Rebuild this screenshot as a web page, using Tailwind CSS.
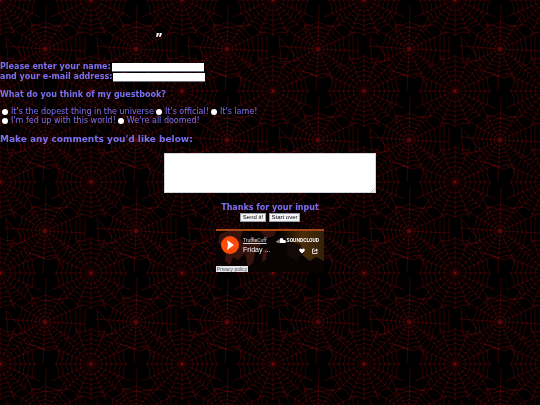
<!DOCTYPE html>
<html lang="en">
<head>
  <meta charset="utf-8">
  <meta name="viewport" content="width=device-width, initial-scale=1">
  <title>Guestbook</title>
  <script src="https://cdn.jsdelivr.net/npm/@tailwindcss/browser@4"></script>
</head>
<body class="min-h-screen bg-black font-['DejaVu_Sans',sans-serif] text-[8px] leading-[10px] text-[#7a72f0]">

  <!-- Tiled spider web background -->
  <svg class="fixed inset-0 -z-10 h-full w-full" aria-hidden="true">
    <defs>
      <path id="ring" vector-effect="non-scaling-stroke" d="M0-30Q8-26 17-25Q21-18 28-13Q27-6 30 2Q26 8 26 17Q18 19 13 27Q6 26-2 30Q-8 26-17 25Q-20 18-27 13Q-26 6-30-2Q-26-8-25-17Q-18-19-13-26Q-6-26 0-30Z"/>
      <g id="rings">
        <use href="#ring" transform="scale(.07)"/>
        <use href="#ring" transform="scale(.2)"/>
        <use href="#ring" transform="scale(.33)"/>
        <use href="#ring" transform="scale(.46)"/>
        <use href="#ring" transform="scale(.6)"/>
        <use href="#ring" transform="scale(.75)"/>
        <use href="#ring" transform="scale(.9)"/>
      </g>
      <path id="arc" vector-effect="non-scaling-stroke" d="M0-40Q8-35 15-37Q20-28 28-28Q28-20 37-15Q35-8 40 0Q35 8 37 15Q28 20 28 28Q20 28 15 37Q8 35 0 40Q-8 35-15 37Q-20 28-28 28Q-28 20-37 15Q-35 8-40 0Q-35-8-37-15Q-28-20-28-28Q-20-28-15-37Q-8-35 0-40Z"/>
      <g id="corner">
        <path d="M-36 0H36M0-36V36M-32-32L32 32M-32 32L32-32M-40-17L40 17M-40 17L40-17M-15-36L15 36M-15 36L15-36"/>
        <use href="#arc" transform="scale(.28)"/>
        <use href="#arc" transform="scale(.4)"/>
        <use href="#arc" transform="scale(.52)"/>
        <use href="#arc" transform="scale(.64)"/>
        <use href="#arc" transform="scale(.76)"/>
        <use href="#arc" transform="scale(.88)"/>
      </g>
      <pattern id="web" width="91" height="91" patternUnits="userSpaceOnUse">
        <g fill="none" stroke="#b80808" stroke-opacity=".38" stroke-width=".7">
          <g transform="translate(45 49)">
            <path d="M0 0L1-44M0 0L23-36M0 0L38-17M0 0L40 2M0 0L34 22M0 0L18 38M0 0L-2 42M0 0L-22 32M0 0L-36 17M0 0L-40-3M0 0L-36-22M0 0L-20-38"/>
            <use href="#rings"/>
          </g>
          <use href="#corner"/>
          <use href="#corner" x="91"/>
          <use href="#corner" y="91"/>
          <use href="#corner" x="91" y="91"/>
          <path d="M6 35L8 62L28 60M7 38L25 59M32 24L45 28L68 25M76 37V60M80 34V62M85 36V60M31 24L34 38M38 75L50 78L60 73M25 70L44 76"/>
        </g>
      </pattern>
    </defs>
    <rect width="100%" height="100%" fill="url(#web)"/>
  </svg>

  <div class="h-[62px] pt-7 pl-[155px] text-[12px] leading-5 font-bold text-white">”</div>

  <form>
    <div class="font-bold">
      <div class="flex items-center gap-px">
        <label for="name">Please enter your name:</label>
        <input id="name" type="text" class="h-[9px] w-[92px] border-b border-gray-500 bg-white text-black">
      </div>
      <div class="flex items-center gap-px">
        <label for="email">and your e-mail address:</label>
        <input id="email" type="email" class="h-[9px] w-[92px] border-b border-gray-500 bg-white text-black">
      </div>
    </div>

    <fieldset class="mt-2">
      <legend class="font-bold">What do you think of my guestbook?</legend>
      <div class="mt-[7px] leading-[9px]">
        <div class="flex gap-[2px] pl-[2px]">
          <label class="flex items-center gap-[3px]"><input type="radio" name="opinion" class="size-[6px] appearance-none rounded-full bg-white checked:bg-blue-600">It's the dopest thing in the universe</label>
          <label class="flex items-center gap-[3px]"><input type="radio" name="opinion" class="size-[6px] appearance-none rounded-full bg-white checked:bg-blue-600">It's official!</label>
          <label class="flex items-center gap-[3px]"><input type="radio" name="opinion" class="size-[6px] appearance-none rounded-full bg-white checked:bg-blue-600">It's lame!</label>
        </div>
        <div class="flex gap-[2px] pl-[2px]">
          <label class="flex items-center gap-[3px]"><input type="radio" name="opinion" class="size-[6px] appearance-none rounded-full bg-white checked:bg-blue-600">I'm fed up with this world!</label>
          <label class="flex items-center gap-[3px]"><input type="radio" name="opinion" class="size-[6px] appearance-none rounded-full bg-white checked:bg-blue-600">We're all doomed!</label>
        </div>
      </div>
    </fieldset>

    <label for="comments" class="mt-2 block text-[9px] leading-3 font-bold">Make any comments you'd like below:</label>
    <div class="relative mx-auto mt-2 w-[212px]">
      <textarea id="comments" class="block h-10 w-full resize-none border border-gray-300 bg-white text-black"></textarea>
      <svg class="absolute right-px bottom-px size-1" viewBox="0 0 4 4" stroke="#999" stroke-width=".5" aria-hidden="true"><path d="M0 4L4 0M2 4L4 2"/></svg>
    </div>

    <div class="mt-[10px] text-center font-bold">Thanks for your input</div>
    <div class="flex justify-center gap-[3px] font-['Liberation_Sans',sans-serif] text-[6px] leading-[7px] text-black">
      <button type="submit" class="h-[9px] w-[26px] border border-gray-400 bg-gray-100">Send it!</button>
      <button type="reset" class="h-[9px] w-[31px] border border-gray-400 bg-gray-100">Start over</button>
    </div>
  </form>

  <!-- Music player -->
  <section class="relative mx-auto mt-[7px] h-[43px] w-[108px] overflow-hidden border-t-2 border-[#a84312] bg-[#080202] font-['Liberation_Sans',sans-serif] text-white">
    <svg class="absolute inset-0 h-full w-full" viewBox="0 0 108 41" preserveAspectRatio="none" aria-hidden="true">
      <defs>
        <linearGradient id="glow"><stop offset="0" stop-color="#4a2c08" stop-opacity="0"/><stop offset=".5" stop-color="#4a2c08"/><stop offset="1" stop-color="#33200a"/></linearGradient>
      </defs>
      <path fill="#38120d" d="M4 3L12 0H27L24 8L30 12L38 7L46 13L40 19L37 32L32 36L29 22L22 29L17 26L14 34L9 30L10 18L2 12ZM44 0H60L58 5L50 7ZM47 19L52 17L50 29L46 31Z"/>
      <path fill="url(#glow)" d="M64 0H108V30L100 26L94 30L84 22L76 24L78 12L66 7Z"/>
      <path fill="#150905" d="M70 11L84 13L88 22L80 30L72 25Z"/>
    </svg>
    <div class="relative flex p-[5px]">
      <button type="button" aria-label="Play" class="size-[18px] shrink-0 rounded-full bg-[#ff4a08]">
        <svg viewBox="0 0 18 18" fill="#fff"><path d="M6 4l7 5-7 5 1-5z"/></svg>
      </button>
      <div class="ml-1 flex-1 text-[7px] leading-[11px]">
        <a href="#" class="block w-fit font-['Roboto',sans-serif] text-[5px] leading-[8px] text-gray-300 underline">TruffleCuff</a>
        <a href="#" class="block">Friday ...</a>
      </div>
      <div class="mt-[2px] flex flex-col items-end gap-[5px]">
        <a href="#" class="flex items-center gap-px font-['Roboto',sans-serif] text-[5px] leading-[5px] font-bold">
          <svg class="h-[5px] w-[10px]" viewBox="0 0 20 10" fill="#fff" aria-hidden="true"><path d="M0 8V6h1V9zM2 9V5h1V10zM4 10V3h1V10zM6 10V3h1V10zM8 10V1Q14-2 15 4Q20 3 20 7Q20 10 17 10Z"/></svg>
          SOUNDCLOUD
        </a>
        <div class="mr-px flex gap-[7px]">
          <button type="button" aria-label="Like"><svg class="size-[6px]" viewBox="0 0 12 12" fill="#fff"><path d="M6 11L1 6Q-1 2 3 1Q5 1 6 3Q7 1 9 1Q13 2 11 6Z"/></svg></button>
          <button type="button" aria-label="Share"><svg class="size-[6px]" viewBox="0 0 12 12" fill="none" stroke="#fff" stroke-width="1.6"><path d="M5 2H1V11H10V7M4 8Q4 4 9 4"/><path fill="#fff" stroke="none" d="M8 1L12 4L8 7Z"/></svg></button>
        </div>
      </div>
    </div>
    <a href="#" class="absolute bottom-0 left-0 w-8 bg-gray-200 text-center text-[5px] leading-[6px] text-gray-600">Privacy policy</a>
  </section>
</body>
</html>
